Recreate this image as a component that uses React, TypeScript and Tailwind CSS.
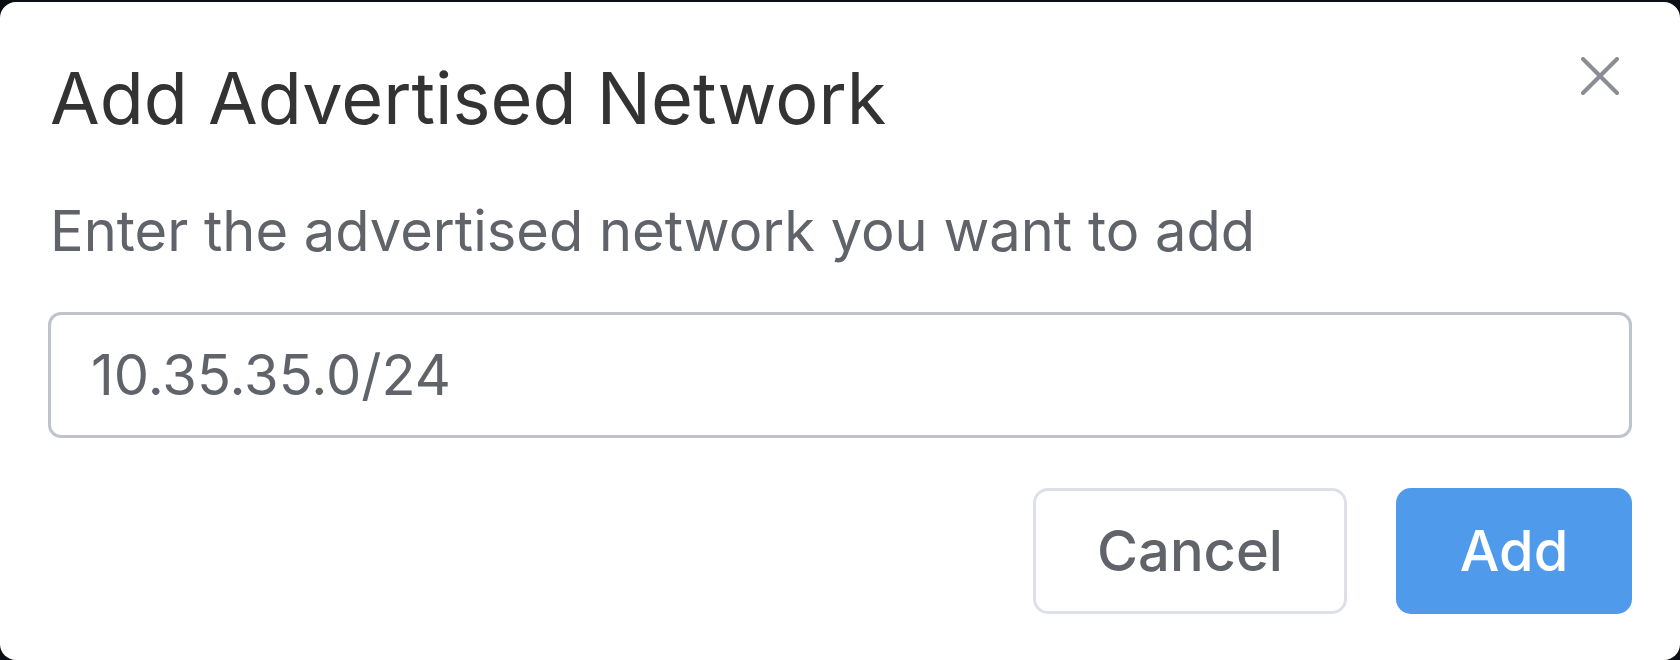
export default function App() {
  return (
    <div className="h-[660px] w-full overflow-hidden bg-[#0b0e14] pt-[2px] font-['Inter','Noto_Sans',sans-serif]">
      <div className="h-[658px] rounded-[16px] bg-white px-[48px] pt-[55px]">
        <div className="flex items-start justify-between">
          <h1 className="mt-[5px] pl-[2px] text-[72px] leading-none font-normal text-[#333333]">
            Add Advertised Network
          </h1>
          <button type="button" aria-label="Close" className="mr-[13px] text-[#8a8d94]">
            <svg width="38" height="38" viewBox="0 0 38 38" fill="none" stroke="currentColor" strokeWidth="4" strokeLinecap="round">
              <line x1="2" y1="2" x2="36" y2="36" />
              <line x1="36" y1="2" x2="2" y2="36" />
            </svg>
          </button>
        </div>

        <p className="mt-[69px] pl-[2px] text-[56px] leading-none text-[#606369]">
          Enter the advertised network you want to add
        </p>

        <input
          type="text"
          defaultValue="10.35.35.0/24"
          className="mt-[53px] block h-[126px] w-full rounded-[13px] border-[3px] border-[#bfc3ca] bg-white pl-[40px] text-[56px] leading-none text-[#606369] outline-none"
        />

        <div className="mt-[50px] flex justify-end gap-[49px]">
          <button
            type="button"
            className="h-[126px] w-[314px] rounded-[15px] border-[3px] border-[#dde0e6] bg-white text-[56px] leading-none font-medium text-[#606369]"
          >
            Cancel
          </button>
          <button
            type="button"
            className="h-[126px] w-[236px] rounded-[15px] bg-[#4f9aeb] text-[56px] leading-none font-medium text-white"
          >
            Add
          </button>
        </div>
      </div>
    </div>
  );
}
